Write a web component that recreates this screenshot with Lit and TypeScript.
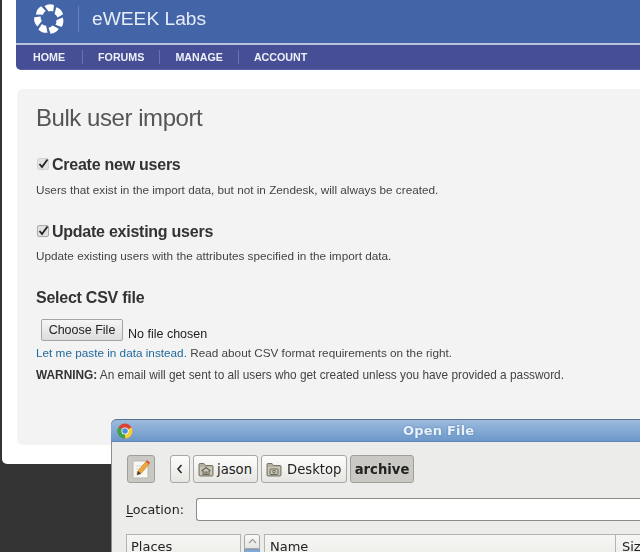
import { LitElement, html, css, svg } from "lit";
import { customElement } from "lit/decorators.js";

const folder = (inner: unknown) => html`<svg class="folder" viewBox="0 0 16 15" width="16" height="15">
  <path d="M1 2.5 Q1 1.5 2 1.5 H6 L7.5 3.5 H14 Q15 3.5 15 4.5 V13 Q15 14 14 14 H2 Q1 14 1 13 Z" fill="#b3b09c" stroke="#77756a" stroke-width="1"/>
  <rect x="2" y="5" width="12" height="8" fill="#c9c7b6"/>
  ${inner}
</svg>`;

const homeGlyph = svg`<path d="M3.5 9 L8 5.5 L12.5 9 M5 8.5 V12.5 H11 V8.5 M7 12.5 V10 H9 V12.5" fill="none" stroke="#6d6b5f" stroke-width="1.1"/>`;
const camGlyph = svg`<rect x="4" y="7" width="8" height="5.5" rx="0.6" fill="none" stroke="#6d6b5f"/><circle cx="8" cy="9.7" r="1.4" fill="none" stroke="#6d6b5f"/>`;

@customElement("app-root")
export class AppRoot extends LitElement {
  static styles = css`
    :host {
      display: block;
      position: relative;
      width: 640px;
      height: 552px;
      overflow: hidden;
      background: #333333;
      font-family: "Liberation Sans", Arial, sans-serif;
    }
    .page {
      margin-left: 2px;
      height: 464px;
      box-sizing: border-box;
      background: #ffffff;
      border-bottom-left-radius: 5px;
      padding-left: 14px;
      overflow: hidden;
      filter: blur(0.35px);
    }
    .brand {
      height: 43px;
      background: #4464a8;
      display: flex;
      align-items: center;
      padding-left: 17px;
      gap: 13px;
    }
    .brand-sep {
      width: 1px;
      height: 26px;
      background: #6580ba;
      margin-top: -5px;
    }
    .logo { margin-top: -5px; }
    .brand-name {
      color: #e6edf7;
      font-size: 19.2px;
      margin-top: -6px;
    }
    .rule { height: 2px; background: #b8c2dc; }
    .nav {
      height: 25px;
      background: #464f96;
      border-bottom-left-radius: 5px;
      border-bottom: 1px solid #5560a8;
      box-sizing: border-box;
      display: flex;
      align-items: center;
      padding-left: 17px;
    }
    .nav span {
      color: #eef0f8;
      font-size: 10.7px;
      font-weight: bold;
    }
    .nav i {
      display: block;
      width: 1px;
      height: 14px;
      background: #6a73ae;
      margin: 0 15px;
    }
    .nav i.first { margin: 0 15.5px 0 16.5px; }
    .panel {
      margin: 19px 0 0 1px;
      height: 356px;
      box-sizing: border-box;
      background: #f3f3f3;
      border-radius: 6px 0 0 6px;
      padding: 14px 0 0 19px;
      color: #333;
    }
    h1 {
      margin: 0;
      font-size: 24px;
      letter-spacing: -0.45px;
      line-height: 29px;
      font-weight: normal;
      color: #555555;
    }
    .check {
      display: flex;
      align-items: center;
      gap: 3px;
      margin: 23px 0 0 1px;
      height: 20px;
    }
    .check.second { margin-top: 25px; }
    .box {
      width: 12px;
      height: 12px;
      margin-top: -3px;
      flex: none;
    }
    h2 {
      margin: 0;
      font-size: 16px;
      letter-spacing: -0.25px;
      line-height: 20px;
      font-weight: bold;
      color: #333333;
    }
    p {
      margin: 8px 0 0;
      font-size: 11.75px;
      line-height: 14px;
      color: #444444;
      white-space: nowrap;
    }
    p.tight { margin-top: 7px; }
    .csv { margin-top: 25px; }
    .file {
      display: flex;
      align-items: flex-end;
      margin: 11px 0 0 5px;
      height: 22px;
    }
    .choose {
      width: 82px;
      height: 22px;
      box-sizing: border-box;
      border: 1px solid #a5a5a5;
      border-radius: 2px;
      background: linear-gradient(#f6f6f6, #dcdcdc);
      font-family: inherit;
      font-size: 12.5px;
      line-height: 20px;
      text-align: center;
      color: #222;
    }
    .nofile {
      font-size: 12.5px;
      color: #222;
      margin: 0 0 -1px 5px;
      line-height: 16px;
    }
    .links { margin-top: 5px; }
    .links a { color: #1f6a9c; text-decoration: none; }
    .warn { margin-top: 8px; font-size: 11.85px; }
    .warn b { color: #333; }

    .dialog {
      position: absolute;
      left: 111px;
      top: 419px;
      width: 540px;
      height: 140px;
      box-sizing: border-box;
      background: #ececea;
      border-left: 1px solid #8f8f8f;
      border-top-left-radius: 6px;
      font-family: "DejaVu Sans", sans-serif;
      color: #222;
      filter: blur(0.3px);
    }
    .titlebar {
      height: 23px;
      box-sizing: border-box;
      background: linear-gradient(#9dbbdd, #6c98c9);
      border-top: 1px solid #56708f;
      border-bottom: 1px solid #5d86b5;
      border-top-left-radius: 6px;
      margin-left: -1px;
      display: flex;
      align-items: center;
      position: relative;
      padding-left: 6px;
    }
    .title {
      position: absolute;
      left: 292px;
      top: 3px;
      font-weight: bold;
      font-size: 13px;
      line-height: 16px;
      letter-spacing: 0.2px;
      color: #eaf1f9;
      text-shadow: 0 0 2px #4f7bae;
    }
    .crumbs {
      display: flex;
      margin: 13px 0 0 15px;
      height: 28px;
    }
    .btn {
      box-sizing: border-box;
      height: 28px;
      border: 1px solid #a8a8a2;
      border-radius: 3px;
      background: linear-gradient(#fdfdfc, #e5e5e1);
      display: flex;
      align-items: center;
      font-size: 13.2px;
      color: #222;
      margin-right: 3px;
    }
    .toggle {
      width: 28px;
      justify-content: center;
      background: #c9c8c2;
      border-color: #a0a09a;
      margin-right: 15px;
    }
    .back { width: 20px; justify-content: center; }
    .jason { width: 65px; padding-left: 4px; gap: 3px; }
    .desktop { width: 86px; padding-left: 4px; gap: 5px; }
    .archive {
      width: 64px;
      justify-content: center;
      background: #c9c8c2;
      border-color: #a0a09a;
      font-weight: bold;
      margin-right: 0;
    }
    .folder { flex: none; }
    .loc {
      display: flex;
      align-items: center;
      margin: 15px 0 0 14px;
      height: 23px;
      font-size: 12.7px;
    }
    .loc label { width: 70px; flex: none; }
    .loc u { text-underline-offset: 2px; }
    .loc .input {
      flex: 1;
      height: 23px;
      box-sizing: border-box;
      background: #fff;
      border: 1px solid #8d8d88;
      border-radius: 3px;
      border-right: none;
    }
    .lists {
      display: flex;
      margin: 13px 0 0 14px;
      height: 30px;
    }
    .head {
      box-sizing: border-box;
      height: 30px;
      border: 1px solid #b5b5b0;
      background: linear-gradient(#f6f6f4, #e9e9e6);
      font-size: 13px;
      padding: 3px 0 0 4px;
      line-height: 18px;
    }
    .places { width: 115px; }
    .scroll {
      width: 16px;
      margin-left: 3px;
      flex: none;
    }
    .scroll .up {
      height: 15px;
      box-sizing: border-box;
      border: 1px solid #a8a8a2;
      border-radius: 3px 3px 0 0;
      background: linear-gradient(#fbfbfa, #e6e6e3);
      display: flex;
      justify-content: center;
      padding-top: 3px;
    }
    .scroll .thumb { height: 15px; background: #86a9d3; border: 1px solid #7a9cc6; box-sizing: border-box; }
    .name { width: 352px; margin-left: 4px; padding-left: 5px; }
    .size { flex: 1; border-left: none; padding-left: 6px; }
  `;

  render() {
    const petals = [0, 51.4, 102.8, 154.3, 205.7, 257.1, 308.6];
    return html`
      <div class="page">
        <div class="brand">
          <svg class="logo" width="32" height="32" viewBox="-16 -16 32 32">
            ${petals.map(
              (a) => svg`<path transform="rotate(${a})" d="M-4.6 -13 Q0 -16 5 -14 L4.2 -7.6 Q2 -8.4 -0.4 -7.4 Z" fill="#ffffff"/>`
            )}
          </svg>
          <div class="brand-sep"></div>
          <div class="brand-name">eWEEK Labs</div>
        </div>
        <div class="rule"></div>
        <div class="nav">
          <span>HOME</span><i class="first"></i><span>FORUMS</span><i></i><span>MANAGE</span><i></i><span>ACCOUNT</span>
        </div>
        <div class="panel">
          <h1>Bulk user import</h1>
          <div class="check">
            <svg class="box" viewBox="0 0 12 12"><rect x="0.5" y="0.5" width="11" height="11" rx="1.5" fill="#e2e2e2" stroke="#d4d4d4"/><path d="M2.5 6 L5 9 L10.5 1.5" fill="none" stroke="#222" stroke-width="1.8"/></svg>
            <h2>Create new users</h2>
          </div>
          <p>Users that exist in the import data, but not in Zendesk, will always be created.</p>
          <div class="check second">
            <svg class="box" viewBox="0 0 12 12"><rect x="0.5" y="0.5" width="11" height="11" rx="1.5" fill="#e2e2e2" stroke="#aaa"/><path d="M2.5 6 L5 9 L10.5 1.5" fill="none" stroke="#222" stroke-width="1.8"/></svg>
            <h2>Update existing users</h2>
          </div>
          <p class="tight">Update existing users with the attributes specified in the import data.</p>
          <h2 class="csv">Select CSV file</h2>
          <div class="file">
            <div class="choose">Choose File</div>
            <div class="nofile">No file chosen</div>
          </div>
          <p class="links"><a>Let me paste in data instead.</a> Read about CSV format requirements on the right.</p>
          <p class="warn"><b>WARNING:</b> An email will get sent to all users who get created unless you have provided a password.</p>
        </div>
      </div>
      <div class="dialog">
        <div class="titlebar">
          <svg width="16" height="16" viewBox="0 0 16 16">
            <circle cx="8" cy="8" r="7.5" fill="#d9443a"/>
            <path d="M8 8 L1.5 11.75 A7.5 7.5 0 0 0 8 15.5 Z" fill="#3aa64a"/>
            <path d="M1.5 11.75 A7.5 7.5 0 0 1 1.5 4.25 L8 8 Z" fill="#3aa64a"/>
            <path d="M8 8 L14.5 4.25 A7.5 7.5 0 0 1 8 15.5 Z" fill="#f4cf3c"/>
            <circle cx="8" cy="8" r="3.6" fill="#fff"/>
            <circle cx="8" cy="8" r="2.8" fill="#4f8fdc"/>
          </svg>
          <div class="title">Open File</div>
        </div>
        <div class="crumbs">
          <div class="btn toggle">
            <svg width="20" height="22" viewBox="0 0 20 22">
              <rect x="2" y="3" width="15" height="17" rx="1" fill="#f8f8f4" stroke="#b9b7ae"/>
              <path d="M5 8 H12 M5 11 H10 M5 14 H9" stroke="#d8d6cc" stroke-width="1"/>
              <path d="M6 17 L7 13 L15 3.5 L18 6 L10 15.5 Z" fill="#f1a83a" stroke="#b8741c" stroke-width="0.6"/>
              <path d="M15 3.5 L18 6 L19 4.8 L16 2.3 Z" fill="#d8402e"/>
              <path d="M6 17 L7 13 L10 15.5 Z" fill="#3b3b3b"/>
            </svg>
          </div>
          <div class="btn back">
            <svg width="8" height="10" viewBox="0 0 8 10"><path d="M5.5 1 L2 5 L5.5 9" fill="none" stroke="#222" stroke-width="1.5"/></svg>
          </div>
          <div class="btn jason">${folder(homeGlyph)}<span>jason</span></div>
          <div class="btn desktop">${folder(camGlyph)}<span>Desktop</span></div>
          <div class="btn archive">archive</div>
        </div>
        <div class="loc">
          <label><u>L</u>ocation:</label>
          <div class="input"></div>
        </div>
        <div class="lists">
          <div class="head places">Places</div>
          <div class="scroll">
            <div class="up"><svg width="9" height="6" viewBox="0 0 9 6"><path d="M1 5 L4.5 1.5 L8 5" fill="none" stroke="#999" stroke-width="1.2"/></svg></div>
            <div class="thumb"></div>
          </div>
          <div class="head name">Name</div>
          <div class="head size">Size</div>
        </div>
      </div>
    `;
  }
}
